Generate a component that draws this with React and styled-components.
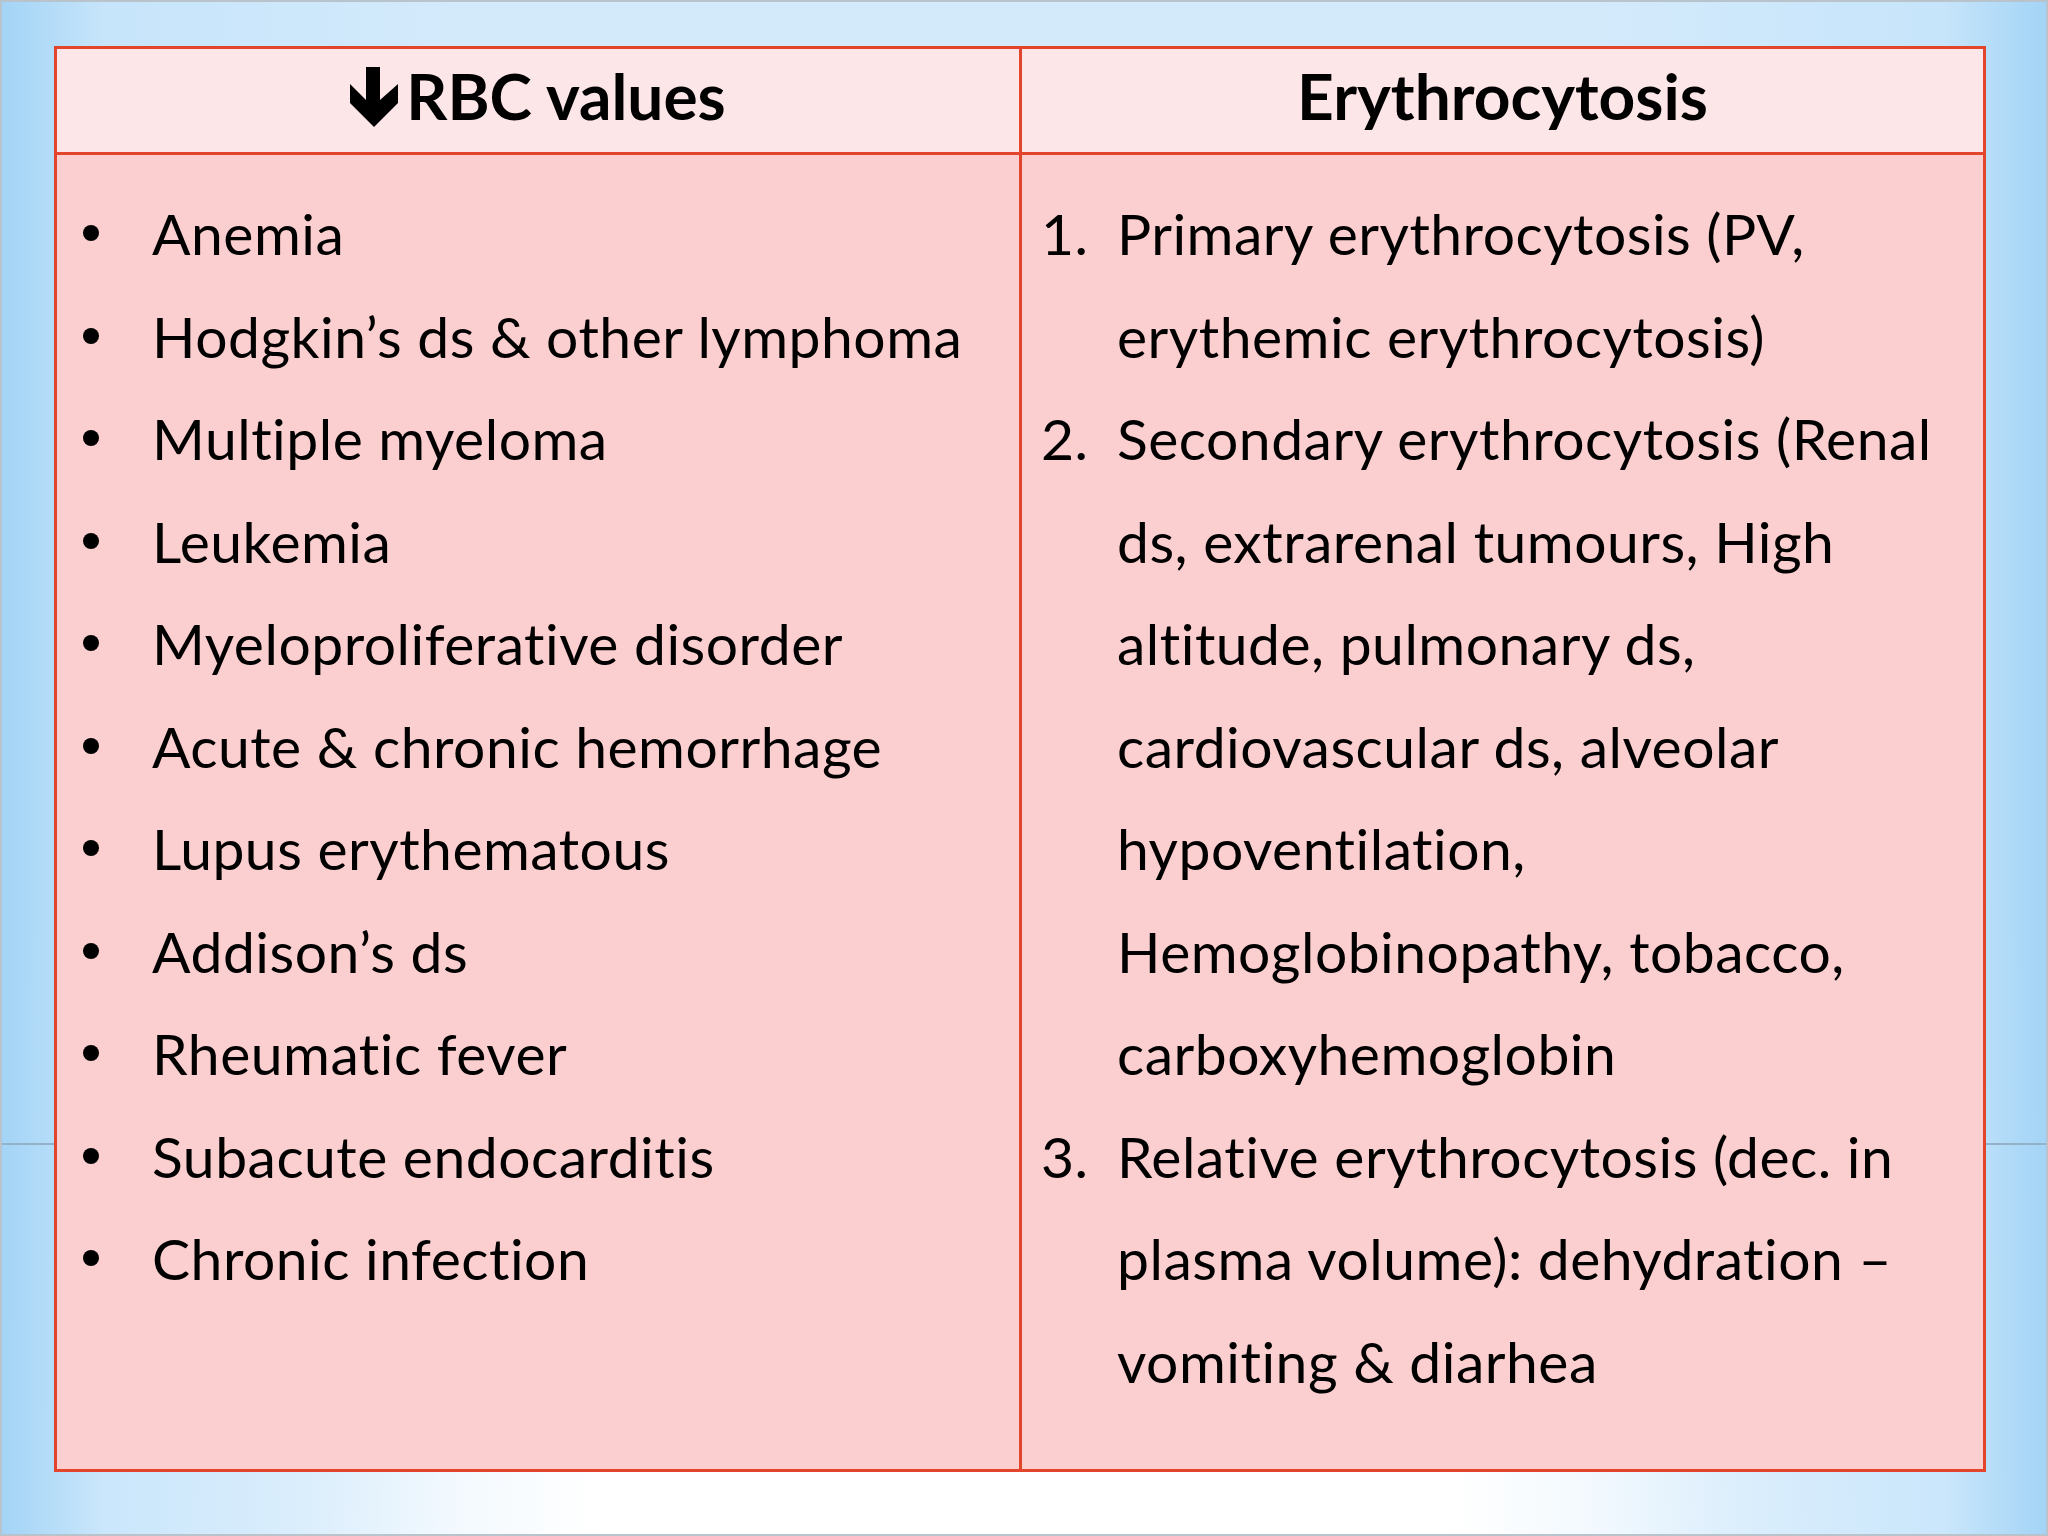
import styled, { createGlobalStyle } from 'styled-components';

const GlobalStyle = createGlobalStyle`
    * {
        box-sizing: border-box;
    }
    body {
        margin: 0;
        font-family: Lato, "Open Sans", "DejaVu Sans", sans-serif;
        font-variant-ligatures: none;
        color: #000;
    }
`;

const rbcItems = [
    'Anemia',
    'Hodgkin’s ds & other lymphoma',
    'Multiple myeloma',
    'Leukemia',
    'Myeloproliferative disorder',
    'Acute & chronic hemorrhage',
    'Lupus erythematous',
    'Addison’s ds',
    'Rheumatic fever',
    'Subacute endocarditis',
    'Chronic infection',
];

const erythroItems = [
    ['Primary erythrocytosis (PV,', 'erythemic erythrocytosis)'],
    [
        'Secondary erythrocytosis (Renal',
        'ds, extrarenal tumours, High',
        'altitude, pulmonary ds,',
        'cardiovascular ds, alveolar',
        'hypoventilation,',
        'Hemoglobinopathy, tobacco,',
        'carboxyhemoglobin',
    ],
    [
        'Relative erythrocytosis (dec. in',
        'plasma volume): dehydration –',
        'vomiting & diarhea',
    ],
];

const DownArrow = () => (
    <ArrowSvg viewBox="0 0 48 60" aria-hidden="true">
        <polygon points="16,0 30,0 30,33 48,17 48,36 24,60 0,36 0,17 16,33" fill="#000" />
    </ArrowSvg>
);

const App = () => {
    return (
        <>
            <GlobalStyle />
            <Slide>
                <Table>
                    <HeadCell $divider>
                        <DownArrow />
                        RBC values
                    </HeadCell>
                    <HeadCell>Erythrocytosis</HeadCell>

                    <BodyCell $divider>
                        <BulletList>
                            {rbcItems.map((item) => (
                                <BulletRow key={item}>
                                    <Dot />
                                    {item}
                                </BulletRow>
                            ))}
                        </BulletList>
                    </BodyCell>

                    <BodyCell>
                        <NumberList>
                            {erythroItems.map((lines, i) => (
                                <NumberRow key={i}>
                                    <Num>{i + 1}.</Num>
                                    <NumText>
                                        {lines.map((line, j) => (
                                            <Line key={j}>{line}</Line>
                                        ))}
                                    </NumText>
                                </NumberRow>
                            ))}
                        </NumberList>
                    </BodyCell>
                </Table>
            </Slide>
        </>
    );
};

export default App;

const Slide = styled.div`
    width: 2048px;
    height: 1536px;
    padding: 44px 60px 62px 52px;
    border: 2px solid #b9c3cb;
    background:
        linear-gradient(to bottom, transparent 1141px, #93b2c9 1141px, #93b2c9 1143px, transparent 1143px),
        linear-gradient(to right, #a3d4f6 0%, rgba(190, 225, 250, 0.6) 5%, rgba(255, 255, 255, 0) 22%, rgba(255, 255, 255, 0) 78%, rgba(190, 225, 250, 0.6) 95%, #a3d4f6 100%),
        radial-gradient(ellipse 60% 75% at 50% 100%, #ffffff 0%, #ffffff 35%, #e4f2fd 60%, #d3eafb 100%);
`;

const Table = styled.div`
    height: 100%;
    display: grid;
    grid-template-columns: 965px 1fr;
    grid-template-rows: 106px 1fr;
    border: 3px solid #e2452b;
`;

const HeadCell = styled.div`
    display: flex;
    align-items: center;
    justify-content: center;
    gap: 8px;
    background: #fde6e7;
    border-bottom: 3px solid #e2452b;
    border-right: ${(p) => (p.$divider ? '3px solid #e2452b' : 'none')};
    font-size: 64px;
    font-weight: 700;
    padding-bottom: 10px;
`;

const ArrowSvg = styled.svg`
    width: 48px;
    height: 60px;
    margin-top: 2px;
    flex-shrink: 0;
`;

const BodyCell = styled.div`
    background: #fbcfcf;
    border-right: ${(p) => (p.$divider ? '3px solid #e2452b' : 'none')};
    padding-top: 27px;
    font-size: 57px;
    letter-spacing: 0.5px;
    line-height: 102.5px;
`;

const BulletList = styled.div`
    display: flex;
    flex-direction: column;
    padding-left: 26px;
`;

const BulletRow = styled.div`
    display: flex;
    align-items: center;
    height: 102.5px;
    white-space: nowrap;
`;

const Dot = styled.span`
    width: 16px;
    height: 16px;
    border-radius: 50%;
    background: #000;
    margin-right: 53px;
    flex-shrink: 0;
`;

const NumberList = styled.div`
    display: flex;
    flex-direction: column;
    padding-left: 19px;
`;

const NumberRow = styled.div`
    display: grid;
    grid-template-columns: 76px 1fr;
`;

const Num = styled.span`
    white-space: nowrap;
`;

const NumText = styled.div`
    display: flex;
    flex-direction: column;
`;

const Line = styled.span`
    white-space: nowrap;
`;
